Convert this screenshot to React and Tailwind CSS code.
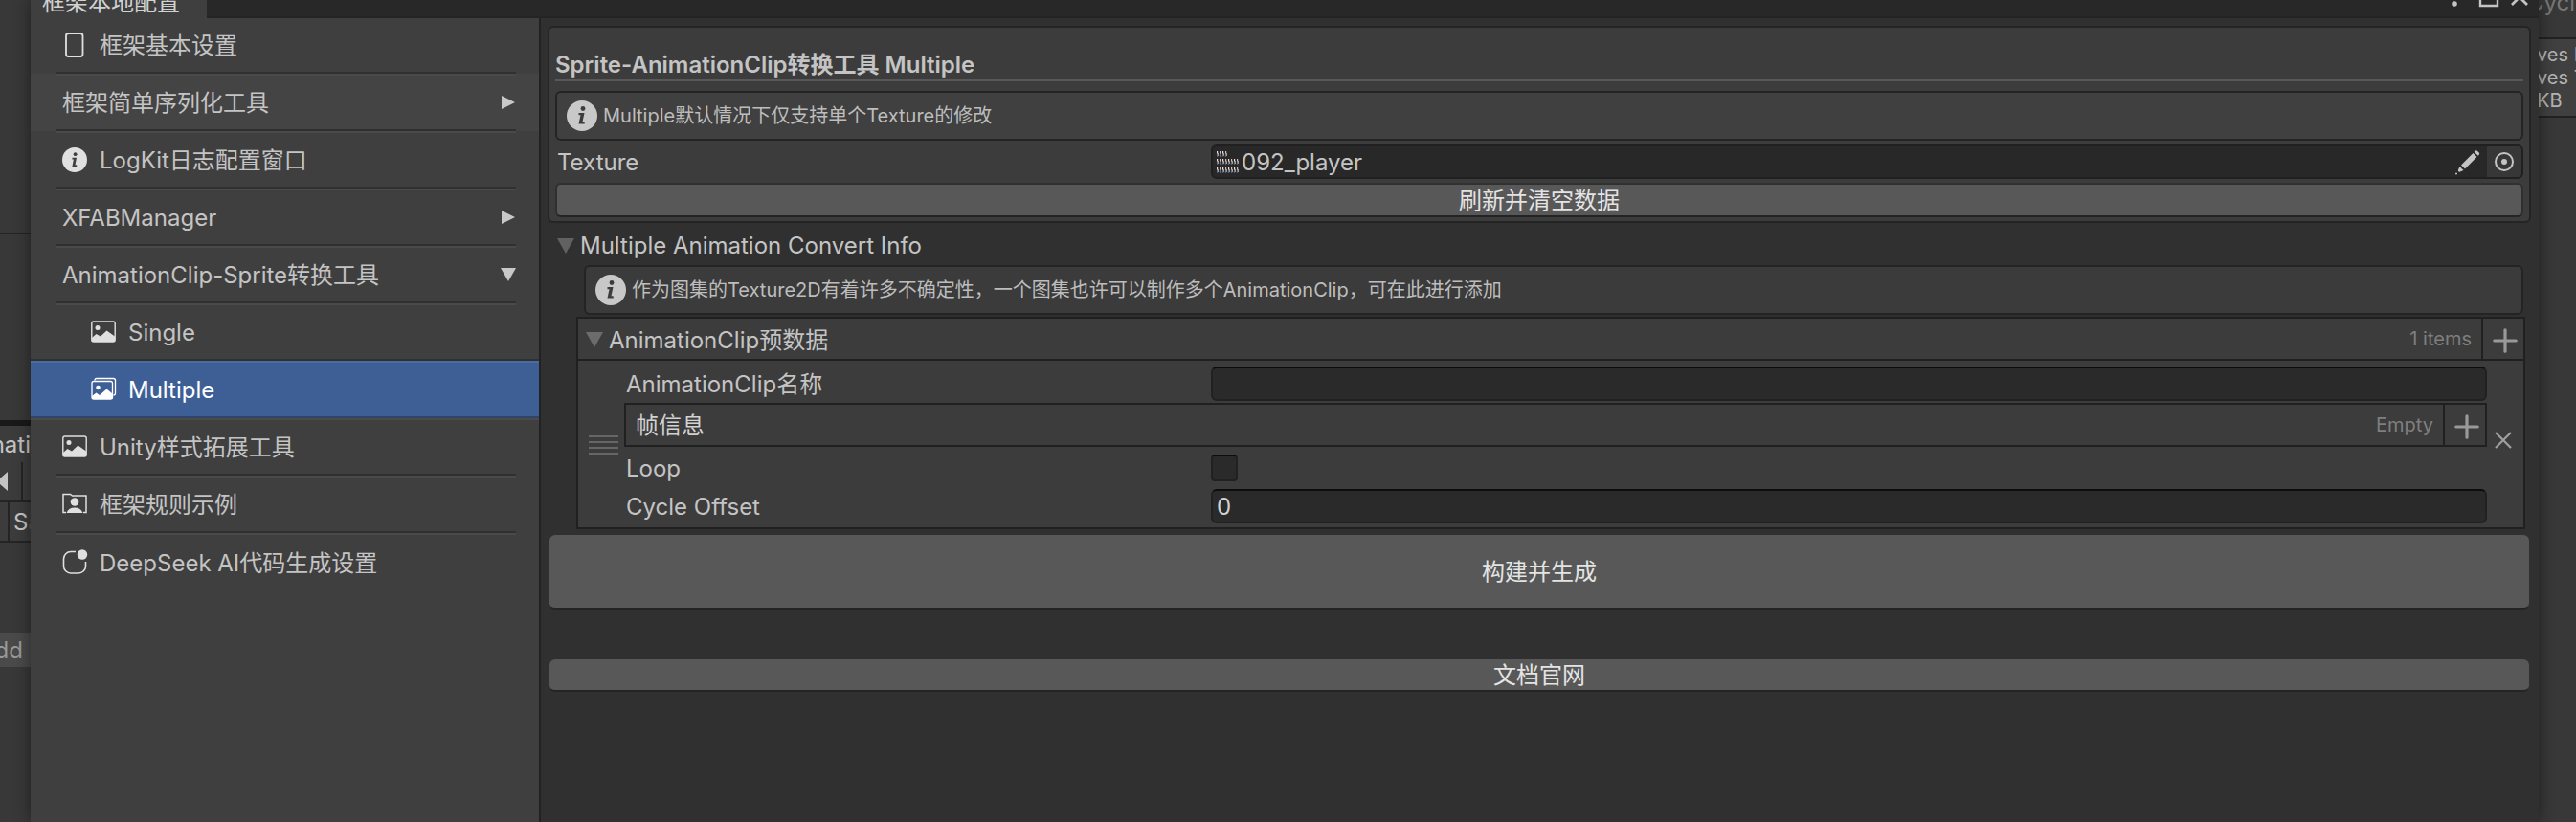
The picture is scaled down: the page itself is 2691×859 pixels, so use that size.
const FONT = "font-['Inter','Noto_Sans_CJK_SC',sans-serif]";

function InfoIcon({ className }) {
  return (
    <svg viewBox="0 0 32 32" className={className} aria-hidden="true">
      <circle cx="16" cy="16" r="16" fill="currentColor" />
      <circle cx="17" cy="8.5" r="2.4" fill="#3c3c3c" />
      <path d="M12.500 13h6l-2 9.300h2.200v2.200h-6.200l2-9.300h-2z" fill="#3c3c3c" />
    </svg>
  );
}

function DeviceIcon() {
  return (
    <svg viewBox="0 0 32 32" className="size-8" fill="none" stroke="#e0e0e0" strokeWidth="1.8" aria-hidden="true">
      <rect x="7" y="4" width="17.500" height="24" rx="2.5" />
    </svg>
  );
}

function SmallInfoIcon() {
  return (
    <svg viewBox="0 0 32 32" className="size-8" aria-hidden="true">
      <circle cx="16" cy="16" r="13" fill="#e0e0e0" />
      <circle cx="16.600" cy="10.200" r="1.9" fill="#3f3f3f" />
      <path d="M13.400 13.800h4.600l-1.500 7.400h1.700v1.800h-4.800l1.500-7.400h-1.500z" fill="#3f3f3f" />
    </svg>
  );
}

function PictureIcon() {
  return (
    <svg viewBox="0 0 32 32" className="size-8" aria-hidden="true">
      <rect x="3.800" y="5" width="24.400" height="21" rx="2" fill="none" stroke="#e0e0e0" strokeWidth="1.4" />
      <circle cx="10" cy="11.500" r="2.5" fill="#e0e0e0" />
      <path d="M4 22l4.500-4 4.500 2.500 6.500-6 8.500 6v4.500a1 1 0 0 1-1 1H5a1 1 0 0 1-1-1z" fill="#e0e0e0" />
    </svg>
  );
}

function PicturesIcon() {
  return (
    <svg viewBox="0 0 32 32" className="size-8" aria-hidden="true">
      <path d="M7 6.500a2 2 0 0 1 2-2h17.500a2 2 0 0 1 2 2V20a2 2 0 0 1-2 2" fill="none" stroke="#fff" strokeWidth="1.3" />
      <rect x="4" y="7.500" width="21.500" height="18.500" rx="2" fill="none" stroke="#fff" strokeWidth="1.3" />
      <circle cx="10.500" cy="14" r="2.300" fill="#fff" />
      <path d="M4 23l4.500-3.500 3.500 2.500 7.500-6.500 6 5v4.500a1 1 0 0 1-1 1H5a1 1 0 0 1-1-1z" fill="#fff" />
    </svg>
  );
}

function PersonFolderIcon() {
  return (
    <svg viewBox="0 0 32 32" className="size-8" aria-hidden="true">
      <path d="M7 24.500H4V5.500h7.500l2 1.500h14.500v17.500h-3" fill="none" stroke="#e0e0e0" strokeWidth="1.5" />
      <circle cx="16" cy="13.500" r="4.300" fill="#e0e0e0" />
      <path d="M7.500 25c1.500-3.700 4.500-5.500 8.500-5.500s7 1.800 8.500 5.500z" fill="#e0e0e0" />
    </svg>
  );
}

function BadgeIcon() {
  return (
    <svg viewBox="0 0 32 32" className="size-8" aria-hidden="true">
      <path d="M17 4.500h-5A7.500 7.500 0 0 0 4.500 12v7.500A7.500 7.500 0 0 0 12 27h8a7.500 7.500 0 0 0 7.500-7.500V15" fill="none" stroke="#e0e0e0" strokeWidth="1.6" />
      <circle cx="24" cy="7.500" r="5.200" fill="#e0e0e0" />
    </svg>
  );
}

function RightTriangle() {
  return (
    <svg viewBox="0 0 16 16" className="size-4" aria-hidden="true">
      <path d="M1 1v14l14-7z" fill="#c8c8c8" />
    </svg>
  );
}

function DownTriangle({ className }) {
  return (
    <svg viewBox="0 0 18 16" className={className} aria-hidden="true">
      <path d="M0 0h18L9 16z" fill="currentColor" />
    </svg>
  );
}

function PlusIcon() {
  return (
    <svg viewBox="0 0 26 26" className="size-[26px]" fill="none" stroke="#999" strokeWidth="3.2" strokeLinecap="round" aria-hidden="true">
      <path d="M13 1.800v22.400M1.800 13h22.400" />
    </svg>
  );
}

function SpriteSheetIcon() {
  const rows = [
    { y: 1, count: 4 },
    { y: 9, count: 8 },
    { y: 18, count: 8 },
  ];
  return (
    <svg viewBox="0 0 24 24" className="size-6" aria-hidden="true">
      {rows.map((row) =>
        Array.from({ length: row.count }, (_, i) => (
          <g key={row.y + "-" + i}>
            <rect x={i * 3} y={row.y} width="1.200" height="2.500" fill={i % 2 ? "#e7b9a0" : "#e4e4ea"} />
            <rect x={i * 3 + 0.6} y={row.y + 2} width="1.100" height="3" fill="#d8d2d2" />
            <rect x={i * 3 - 0.2} y={row.y + 4.5} width="1.300" height="1.200" fill="#5d76a0" />
          </g>
        ))
      )}
    </svg>
  );
}

const items = [
  { label: "框架基本设置", icon: <DeviceIcon /> },
  { label: "框架简单序列化工具", arrow: "right", hover: true },
  { label: "LogKit日志配置窗口", icon: <SmallInfoIcon /> },
  { label: "XFABManager", arrow: "right" },
  { label: "AnimationClip-Sprite转换工具", arrow: "down" },
  { label: "Single", icon: <PictureIcon />, child: true },
  { label: "Multiple", icon: <PicturesIcon />, child: true, selected: true },
  { label: "Unity样式拓展工具", icon: <PictureIcon /> },
  { label: "框架规则示例", icon: <PersonFolderIcon /> },
  { label: "DeepSeek AI代码生成设置", icon: <BadgeIcon /> },
];

function MenuItem({ item, index }) {
  const before = items[index - 1];
  const next = items[index + 1];
  const first = index === 0;
  const last = index === items.length - 1;
  let tone = "text-[#c4c4c4]";
  if (item.hover) tone = "bg-[#444444] text-[#c4c4c4]";
  if (item.selected) tone = "bg-[#3e5f96] text-white";
  const topInset = item.selected || before?.selected ? "" : "ml-[26px] mr-6";
  const bottomInset = item.selected || next?.selected ? "" : "ml-[26px] mr-6";
  const topTone = item.selected ? "bg-[#4b6ba3]" : "bg-[#4a4a4a]";
  const bottomTone = item.selected ? "bg-[#2e4468]" : "bg-[#303030]";
  return (
    <li>
      <button type="button" className={"flex w-full flex-col text-left " + (first ? "h-[58px] " : "h-[60px] ") + tone}>
        {!first && <span className={"h-0.5 self-stretch " + topInset + " " + topTone} />}
        <span className={"flex flex-1 items-center justify-between pr-6 " + (item.child ? "pl-[60px]" : item.icon ? "pl-[30px]" : "pl-[33px]")}>
          <span className="flex items-center gap-2.5">
            {item.icon}
            <span className="pt-0.5">{item.label}</span>
          </span>
          {item.arrow === "right" && <RightTriangle />}
          {item.arrow === "down" && <DownTriangle className="h-4 w-4 text-[#c8c8c8]" />}
        </span>
        {!last && <span className={"h-0.5 self-stretch " + bottomInset + " " + bottomTone} />}
      </button>
    </li>
  );
}

function HelpBox({ children, className }) {
  return (
    <div className={"flex h-[52px] items-center gap-1.5 rounded-md border-2 border-[#242424] px-2.5 text-[20px] leading-6 text-[#bdbdbd] " + className}>
      <InfoIcon className="size-8 shrink-0 text-[#c8c8c8]" />
      <p>{children}</p>
    </div>
  );
}

const inputStyle =
  "h-9 min-w-0 flex-1 rounded-md border-2 border-[#212121] border-t-[#0d0d0d] bg-[#2a2a2a] px-1 text-[#d2d2d2] outline-none";

export default function App() {
  return (
    <div className={"flex h-screen overflow-hidden bg-[#383838] text-[24px] leading-7 text-[#c4c4c4] " + FONT}>
      <aside className="flex w-8 shrink-0 flex-col overflow-hidden whitespace-nowrap">
        <div className="h-[245px] border-b-2 border-[#242424]" />
        <div className="h-[194px]" />
        <div className="h-1.5 bg-[#191919]" />
        <div className="flex h-[38px] items-center justify-end bg-[#3c3c3c] pt-0.5">
          <span>nati</span>
        </div>
        <div className="flex h-[42px] items-center border-b-2 border-[#242424] bg-[#3c3c3c]">
          <svg viewBox="0 0 8 20" className="h-5 w-2" aria-hidden="true">
            <path d="M8 0v20L0 13V7z" fill="#c4c4c4" />
          </svg>
          <span className="ml-3.5 h-full w-0.5 bg-[#242424]" />
        </div>
        <div className="flex h-[42px] items-center border-b-2 border-[#242424] bg-[#3c3c3c]">
          <span className="ml-2 h-full w-0.5 shrink-0 bg-[#242424]" />
          <span className="ml-1 pt-0.5">
            S<span className="text-[#5a5a5a]">a</span>
          </span>
        </div>
        <div className="h-[94px]" />
        <div className="flex h-9 items-center justify-end bg-[#4a4a4a] pr-2 text-[#999]">
          <span className="pt-0.5">Add</span>
        </div>
      </aside>

      <div className="z-10 flex min-w-0 flex-1 flex-col bg-[#303030] shadow-[0_0_16px_rgba(0,0,0,0.45)]">
        <header className="flex h-[19px] shrink-0 items-end justify-between bg-[#282828]">
          <div className="flex h-full w-[184px] items-end overflow-hidden bg-[#3f3f3f] pl-3 pb-0.5 text-[#d2d2d2]">
            <span className="whitespace-nowrap">框架本地配置</span>
          </div>
          <div className="flex h-full flex-1 items-start justify-end border-b-2 border-[#242424] pr-2.5">
            <svg viewBox="0 0 82 8" className="h-2 w-[82px]" aria-hidden="true">
              <circle cx="4" cy="4" r="2.800" fill="#c4c4c4" />
              <path d="M31 0v6h18V0" fill="none" stroke="#c4c4c4" strokeWidth="2.400" />
              <path d="M64 5l8-8 8 8" fill="none" stroke="#c4c4c4" strokeWidth="2.800" />
            </svg>
          </div>
        </header>

        <div className="flex min-h-0 flex-1">
          <nav className="w-[533px] shrink-0 border-r-2 border-[#222222] bg-[#3f3f3f]">
            <ul>
              {items.map((item, index) => (
                <MenuItem key={item.label} item={item} index={index} />
              ))}
            </ul>
          </nav>

          <main className="flex min-w-0 flex-1 flex-col pt-2 pr-2 pl-[7px]">
            <section className="rounded-md border-2 border-[#242424] bg-[#3c3c3c] px-1.5 pt-[26px] pb-1">
              <h1 className="h-[30px] border-b-2 border-[#585858] text-[24px] leading-[26px] font-semibold">
                Sprite-AnimationClip转换工具 Multiple
              </h1>
              <HelpBox className="mt-2.5 bg-[#404040]">Multiple默认情况下仅支持单个Texture的修改</HelpBox>
              <div className="mt-1 flex h-9 items-center">
                <span className="w-[685px] shrink-0 pt-0.5 pl-0.5">Texture</span>
                <div className="flex h-full flex-1 items-center rounded-md border-2 border-[#202020] bg-[#282828] pl-1">
                  <SpriteSheetIcon />
                  <span className="ml-0.5 flex-1 pt-0.5">092_player</span>
                  <button type="button" aria-label="Edit" className="mr-1.5">
                    <svg viewBox="0 0 28 28" className="size-7" fill="#c4c4c4" aria-hidden="true">
                      <path d="M7 17.500L19.500 5l4 4L11 21.500z" />
                      <path d="M20.700 3.800l1-1a1.600 1.600 0 0 1 2.200 0l1.800 1.800a1.600 1.600 0 0 1 0 2.200l-1 1z" />
                      <path d="M5.500 19l4 4-3.500 1.500a1.500 1.500 0 0 1-2-2z" />
                      <circle cx="2" cy="26.500" r="1" />
                    </svg>
                  </button>
                  <button type="button" aria-label="Select" className="flex h-full w-9 items-center justify-center rounded-r bg-[#373737]">
                    <svg viewBox="0 0 20 20" className="size-5" aria-hidden="true">
                      <circle cx="10" cy="10" r="9" fill="none" stroke="#c4c4c4" strokeWidth="2" />
                      <circle cx="10" cy="10" r="3" fill="#c4c4c4" />
                    </svg>
                  </button>
                </div>
              </div>
              <button type="button" className="mt-1 flex h-9 w-full items-center justify-center rounded-md border-2 border-[#303030] border-b-[#242424] bg-[#585858] pt-0.5 text-[#e4e4e4]">
                刷新并清空数据
              </button>
            </section>

            <button type="button" className="mt-2 flex h-8 items-center gap-1.5 pl-2.5 text-left">
              <DownTriangle className="h-4 w-[18px] text-[#616161]" />
              <span>Multiple Animation Convert Info</span>
            </button>

            <HelpBox className="mt-1 mr-2 ml-[38px] bg-[#3b3b3b]">
              作为图集的Texture2D有着许多不确定性，一个图集也许可以制作多个AnimationClip，可在此进行添加
            </HelpBox>

            <section className="mt-0.5 mr-1.5 ml-[30px] border-2 border-[#202020] bg-[#3c3c3c]">
              <header className="flex h-11 items-center border-b-2 border-[#202020]">
                <button type="button" className="flex flex-1 items-center gap-1.5 pt-0.5 pl-2 text-left">
                  <DownTriangle className="h-4 w-[18px] text-[#6c6c6c]" />
                  <span className="pt-0.5">AnimationClip预数据</span>
                </button>
                <span className="pr-2.5 text-[20px] leading-6 text-[#7f7f7f]">1 items</span>
                <button type="button" aria-label="Add clip" className="flex h-full w-11 items-center justify-center border-l-2 border-[#202020] pt-1 pl-1">
                  <PlusIcon />
                </button>
              </header>
              <div className="flex items-center pt-1.5 pb-1">
                <svg viewBox="0 0 32 22" className="ml-[11px] h-[22px] w-8" stroke="#666" strokeWidth="2" aria-hidden="true">
                  <path d="M0 2h31M0 8h31M0 14h31M0 20h31" />
                </svg>
                <div className="ml-[5px] min-w-0 flex-1">
                  <div className="flex h-9 items-center">
                    <label htmlFor="clip-name" className="w-[613px] shrink-0 pt-0.5 pl-0.5">AnimationClip名称</label>
                    <input id="clip-name" type="text" className={inputStyle} />
                  </div>
                  <div className="mt-0.5 flex h-[46px] items-center border-2 border-[#202020]">
                    <span className="flex-1 pt-0.5 pl-2.5 text-[#d2d2d2]">帧信息</span>
                    <span className="pr-2.5 text-[20px] leading-6 text-[#7f7f7f]">Empty</span>
                    <button type="button" aria-label="Add frame" className="flex h-full w-11 items-center justify-center border-l-2 border-[#202020] pt-1 pl-1">
                      <PlusIcon />
                    </button>
                  </div>
                  <div className="mt-1 flex h-9 items-center">
                    <label htmlFor="loop" className="w-[613px] shrink-0 pt-0.5 pl-0.5">Loop</label>
                    <input id="loop" type="checkbox" className="size-7 appearance-none rounded border-2 border-[#212121] border-t-[#0d0d0d] bg-[#2a2a2a]" />
                  </div>
                  <div className="mt-1 flex h-9 items-center">
                    <label htmlFor="cycle-offset" className="w-[613px] shrink-0 pt-0.5 pl-0.5">Cycle Offset</label>
                    <input id="cycle-offset" type="text" defaultValue="0" className={inputStyle} />
                  </div>
                </div>
                <button type="button" aria-label="Remove clip" className="mb-2.5 flex w-[38px] justify-center pr-1">
                  <svg viewBox="0 0 18 18" className="size-[18px]" stroke="#a0a0a0" strokeWidth="2.200" aria-hidden="true">
                    <path d="M1 1l16 16M17 1L1 17" />
                  </svg>
                </button>
              </div>
            </section>

            <div className="mt-1.5 flex flex-col px-0.5">
              <button type="button" className="h-[78px] rounded-md border-b-2 border-[#242424] bg-[#585858] pt-0.5 text-[#e4e4e4]">
                构建并生成
              </button>
              <button type="button" className="mt-[52px] h-[34px] rounded-md border-b-2 border-[#242424] bg-[#585858] pt-0.5 text-[#e4e4e4]">
                文档官网
              </button>
            </div>
          </main>
        </div>
      </div>

      <aside className="w-[39px] shrink-0 overflow-hidden text-[20px] leading-6 whitespace-nowrap">
        <div className="flex h-[41px] flex-col justify-end border-b-2 border-[#222222] pb-6 text-[24px] text-[#777]">
          <span className="-ml-3">Cycle</span>
        </div>
        <div className="h-[82px] border-b-2 border-[#222222] bg-[#404040] pt-1 text-[#b4b4b4]">
          <p className="-ml-0.5">ves D</p>
          <p className="-ml-0.5">ves T</p>
          <p className="-ml-0.5">KB</p>
        </div>
      </aside>
    </div>
  );
}
